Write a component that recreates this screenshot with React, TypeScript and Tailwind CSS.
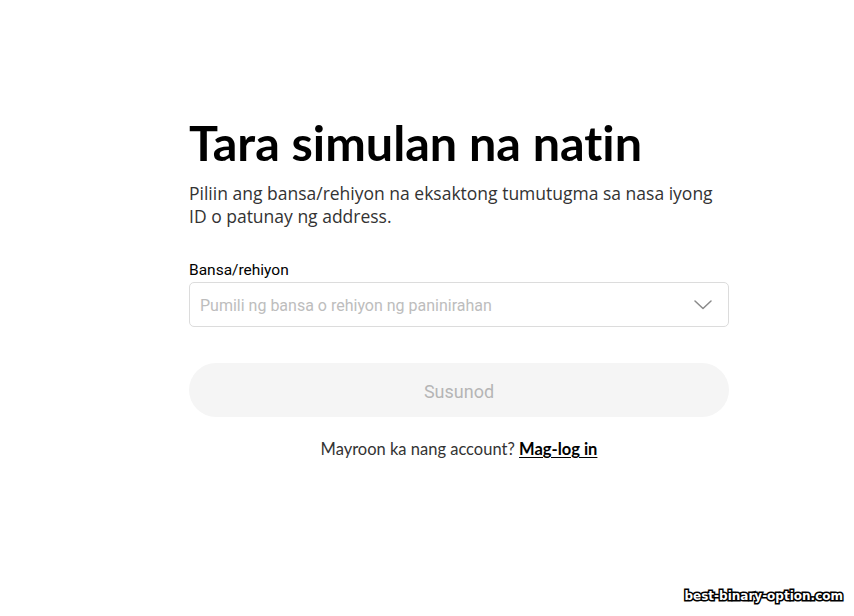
import React from "react";

export default function App() {
    return (
        <div className="relative min-h-[616px] w-full bg-white [font-variant-ligatures:none]" style={{ fontFamily: "Lato, 'Noto Sans', sans-serif" }}>
            <div className="ml-[189px] w-[540px] pt-[113px]">
                <h1 className="text-[48.5px] font-bold leading-[58px] text-black">Tara simulan na natin</h1>
                <p className="mt-[11px] text-[17.5px] leading-[23px] text-[#333]" style={{ fontFamily: "'Open Sans', sans-serif" }}>
                    Piliin ang bansa/rehiyon na eksaktong tumutugma sa nasa iyong ID o patunay ng address.
                </p>

                <div className="mt-[32px]">
                    <label className="block text-[15.5px] leading-[20px] text-black" style={{ fontFamily: "Roboto, sans-serif" }}>
                        Bansa/rehiyon
                    </label>
                    <button className="mt-[2px] flex h-[45px] w-full items-center justify-between rounded-[5px] border border-[#dcdcdc] bg-white pl-[10px] pr-[16px]">
                        <span className="pt-[2px] text-[16px] text-[#bdbdbd]" style={{ fontFamily: "Roboto, sans-serif" }}>
                            Pumili ng bansa o rehiyon ng paninirahan
                        </span>
                        <svg width="18" height="10" viewBox="0 0 18 10" fill="none">
                            <path d="M1 1l8 7.5L17 1" stroke="#8a8a8a" strokeWidth="1.5" strokeLinecap="round" strokeLinejoin="round" />
                        </svg>
                    </button>
                </div>

                <button className="mt-[36px] flex h-[54px] w-full items-center justify-center rounded-full bg-[#f5f5f5] pt-[2px] text-[18px] text-[#b5b5b5]" style={{ fontFamily: "Roboto, sans-serif" }}>
                    Susunod
                </button>

                <p className="mt-[20px] text-center text-[16.5px] text-[#333]">
                    Mayroon ka nang account?{" "}
                    <a href="#" className="font-bold text-black underline underline-offset-2">Mag-log in</a>
                </p>
            </div>

            <div
                className="absolute bottom-[11px] right-[11px] text-[12px] font-bold text-white"
                style={{ fontFamily: "'DejaVu Sans', sans-serif", WebkitTextStroke: "3px black", paintOrder: "stroke fill" }}
            >
                best-binary-option.com
            </div>
        </div>
    );
}
